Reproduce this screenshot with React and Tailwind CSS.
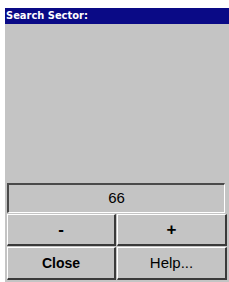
import React, { useState } from 'react';

function Btn({ children, className = '' }) {
  return (
    <button
      className={`flex items-center justify-center border-t border-l border-t-white border-l-white border-b-2 border-r-2 border-b-[#3a3a3a] border-r-[#3a3a3a] bg-[#c4c4c4] text-black ${className}`}
      style={{ fontFamily: '"Liberation Sans", Arial, sans-serif' }}
    >
      {children}
    </button>
  );
}

export default function App() {
  const [value, setValue] = useState(66);

  return (
    <div className="h-[282px] w-[229px] bg-white pl-[5px] pt-[8px]">
      <div className="flex h-[274px] w-[224px] flex-col bg-[#c4c4c4]">
        <div
          className="flex h-[16px] items-center bg-[#0a0a86] pl-[1px] text-[11px] font-bold text-white"
          style={{ fontFamily: '"DejaVu Sans Condensed", "DejaVu Sans", sans-serif' }}
        >
          Search Sector:
        </div>
        <div className="flex-1" />
        <div className="flex flex-col px-[2px] pb-[2px]">
          <div
            className="mr-[2px] flex h-[30px] items-center justify-center border-t-2 border-l-2 border-t-[#4a4a4a] border-l-[#4a4a4a] border-b border-r border-b-white border-r-white text-[15px] text-black"
            style={{ fontFamily: '"Liberation Sans", Arial, sans-serif' }}
          >
            {value}
          </div>
          <div className="mt-[1px] grid grid-cols-[109px_1fr] gap-[1px]">
            <Btn className="h-[32px] text-[17px] font-bold">
              <span onClick={() => setValue(v => v - 1)}>-</span>
            </Btn>
            <Btn className="h-[32px] text-[17px] font-bold">
              <span onClick={() => setValue(v => v + 1)}>+</span>
            </Btn>
            <Btn className="h-[33px] text-[14px] font-bold">Close</Btn>
            <Btn className="h-[33px] text-[15px]">Help...</Btn>
          </div>
        </div>
      </div>
    </div>
  );
}
